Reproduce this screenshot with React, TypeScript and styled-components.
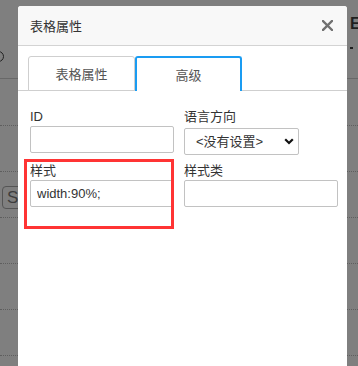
import styled, { createGlobalStyle } from "styled-components";

const GlobalStyle = createGlobalStyle`
  html, body {
    margin: 0;
    padding: 0;
  }
  body {
    font-family: "Liberation Sans", "Noto Sans CJK SC", sans-serif;
  }
`;

// Страница за затемнением
const Page = styled.div`
  position: relative;
  width: 358px;
  height: 366px;
  overflow: hidden;
  background-color: #7f7f7f;
`;

const TopBar = styled.div`
  display: flex;
  justify-content: space-between;
  height: 78px;
  border-bottom: 1px solid #686868;
`;

const Ring = styled.span`
  margin: 51px 0 0 -7px;
  width: 9px;
  height: 9px;
  border: 1.5px solid #222;
  border-radius: 50%;
`;

const SideMark = styled.div`
  display: flex;
  flex-direction: column;
  align-items: flex-start;
  width: 8px;
  padding-top: 15px;
  font-size: 16px;
  font-weight: bold;
  color: #1f1f1f;
  overflow: hidden;

  &::after {
    content: "";
    margin-top: 14px;
    width: 3px;
    height: 2px;
    background: #1f1f1f;
  }
`;

const Row = styled.div<{ $first?: boolean }>`
  display: flex;
  align-items: flex-start;
  height: ${(p) => (p.$first ? 46 : 45)}px;
  border-bottom: 1px dotted #5e5e5e;
`;

const GhostButton = styled.span`
  margin: 14px 0 0 2px;
  padding: 0 6px 0 4px;
  height: 21px;
  line-height: 21px;
  font-size: 17px;
  color: #3d3d3d;
  border: 1px solid #555;
  border-radius: 4px;
`;

// Диалог
const Dialog = styled.div`
  position: absolute;
  left: 18px;
  top: 6px;
  width: 329px;
  height: 400px;
  background: #ffffff;
  border-radius: 3px 3px 0 0;
  overflow: hidden;
`;

const DialogHeader = styled.div`
  display: flex;
  align-items: center;
  justify-content: space-between;
  height: 39px;
  padding: 0 14px 0 12px;
  background: #f8f8f8;
  border-bottom: 1px solid #d3d3d3;
`;

const DialogTitle = styled.h2`
  margin: 0;
  font-size: 13px;
  font-weight: normal;
  color: #333;
`;

const CloseButton = styled.button`
  display: flex;
  padding: 0;
  border: none;
  background: none;
  cursor: pointer;
`;

const Tabs = styled.div`
  display: flex;
  padding: 10px 0 0 10px;
  border-bottom: 1px solid #cfcfcf;
`;

const Tab = styled.div<{ $active?: boolean }>`
  display: flex;
  align-items: center;
  justify-content: center;
  box-sizing: border-box;
  width: 107px;
  height: 35px;
  margin-bottom: -1px;
  font-size: 13px;
  color: #555;
  background: #fff;
  border: ${(p) => (p.$active ? "2px solid #1a9cf2" : "1px solid #cfcfcf")};
  border-bottom: ${(p) => (p.$active ? "none" : "1px solid #cfcfcf")};
  border-radius: 3px 3px 0 0;
`;

const Form = styled.div`
  display: grid;
  grid-template-columns: 144px 154px;
  column-gap: 10px;
  row-gap: 7px;
  padding: 17px 0 0 12px;
`;

const Field = styled.div`
  position: relative;
  display: flex;
  flex-direction: column;
`;

const Label = styled.label`
  height: 18px;
  line-height: 18px;
  font-size: 13px;
  color: #333;
`;

const Input = styled.input`
  box-sizing: border-box;
  height: 27px;
  padding: 0 6px;
  font-family: inherit;
  font-size: 13px;
  color: #333;
  border: 1px solid #c2c2c2;
  border-radius: 2px;
  outline: none;
`;

const SelectWrap = styled.div`
  position: relative;
  margin-top: 2px;
  width: 115px;
`;

const Select = styled.select`
  box-sizing: border-box;
  width: 100%;
  height: 27px;
  padding: 0 0 0 11px;
  font-family: inherit;
  font-size: 13px;
  color: #333;
  background: #fff;
  border: 1px solid #c2c2c2;
  border-radius: 2px;
  appearance: none;
  outline: none;
`;

const Chevron = styled.svg`
  position: absolute;
  right: 5px;
  top: 10px;
  pointer-events: none;
`;

// Красная рамка-выделение поверх поля
const Highlight = styled.div`
  position: absolute;
  left: -6px;
  top: -3px;
  width: 150px;
  height: 70px;
  box-sizing: border-box;
  border: 3px solid #ff3434;
  pointer-events: none;
`;

function App() {
  return (
    <>
      <GlobalStyle />
      <Page>
        <TopBar>
          <Ring />
          <SideMark>E</SideMark>
        </TopBar>
        <Row $first />
        <Row />
        <Row>
          <GhostButton>Si</GhostButton>
        </Row>
        <Row />
        <Row />
        <Row />

        <Dialog>
          <DialogHeader>
            <DialogTitle>表格属性</DialogTitle>
            <CloseButton aria-label="close">
              <svg width="11" height="11" viewBox="0 0 11 11">
                <path
                  d="M1 1 L10 10 M10 1 L1 10"
                  stroke="#707070"
                  strokeWidth="2.4"
                  strokeLinecap="square"
                />
              </svg>
            </CloseButton>
          </DialogHeader>
          <Tabs>
            <Tab>表格属性</Tab>
            <Tab $active>高级</Tab>
          </Tabs>
          <Form>
            <Field>
              <Label>ID</Label>
              <Input />
            </Field>
            <Field>
              <Label>语言方向</Label>
              <SelectWrap>
                <Select defaultValue="">
                  <option value="">&lt;没有设置&gt;</option>
                  <option value="ltr">从左到右 (LTR)</option>
                  <option value="rtl">从右到左 (RTL)</option>
                </Select>
                <Chevron width="10" height="7" viewBox="0 0 10 7">
                  <path
                    d="M1.2 1.2 L5 5 L8.8 1.2"
                    fill="none"
                    stroke="#111"
                    strokeWidth="2.2"
                  />
                </Chevron>
              </SelectWrap>
            </Field>
            <Field>
              <Label>样式</Label>
              <Input defaultValue="width:90%;" />
              <Highlight />
            </Field>
            <Field>
              <Label>样式类</Label>
              <Input />
            </Field>
          </Form>
        </Dialog>
      </Page>
    </>
  );
}

export default App;
